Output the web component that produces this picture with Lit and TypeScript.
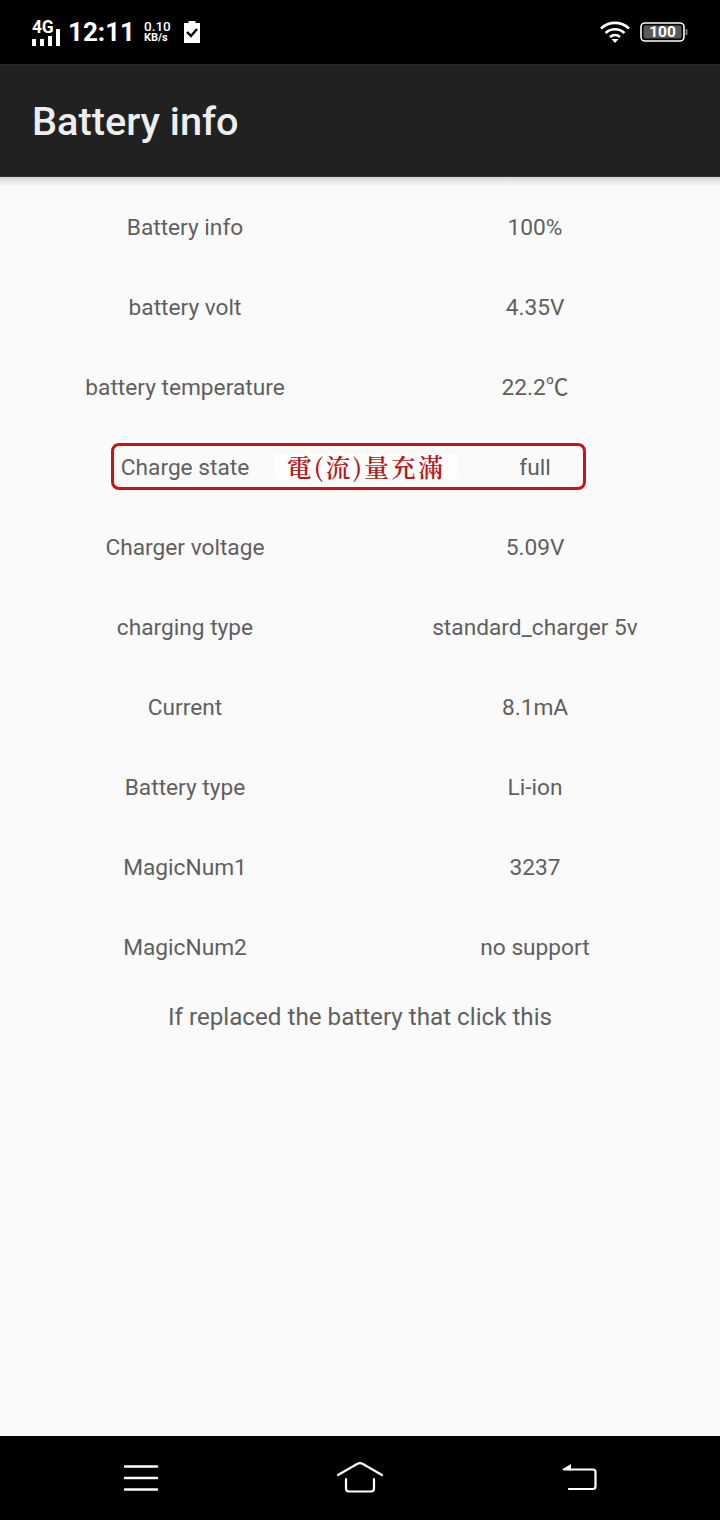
import { LitElement, html, css } from "lit";
import { customElement } from "lit/decorators.js";

const rows: [string, string][] = [
  ["Battery info", "100%"],
  ["battery volt", "4.35V"],
  ["battery temperature", "22.2℃"],
  ["Charge state", "full"],
  ["Charger voltage", "5.09V"],
  ["charging type", "standard_charger 5v"],
  ["Current", "8.1mA"],
  ["Battery type", "Li-ion"],
  ["MagicNum1", "3237"],
  ["MagicNum2", "no support"],
];

@customElement("app-root")
export class AppRoot extends LitElement {
  static styles = css`
    :host {
      display: flex;
      flex-direction: column;
      width: 720px;
      height: 1520px;
      background: #fafafa;
      font-family: Roboto, "Noto Sans CJK TC", sans-serif;
      color: #5f5f5f;
      overflow: hidden;
    }
    .status {
      height: 64px;
      flex: none;
      background: #000;
      color: #fff;
      display: flex;
      align-items: center;
      padding: 0 32px;
      box-sizing: border-box;
    }
    .net-wrap { position: relative; width: 30px; height: 30px; margin-right: 6px; }
    .net-wrap svg { display: block; }
    .net-label {
      position: absolute;
      left: 0;
      top: 2px;
      font-size: 17.500px;
      line-height: 17px;
      font-weight: 700;
      letter-spacing: -0.3px;
    }
    .time { font-size: 26px; font-weight: 700; line-height: 30px; }
    .speed {
      display: flex;
      flex-direction: column;
      align-items: flex-start;
      margin-left: 9px;
      font-size: 13.500px;
      line-height: 12px;
      font-weight: 500;
    }
    .speed .u { font-size: 11px; font-weight: 700; line-height: 12px; }
    .check { display: block; margin-left: 13px; }
    .grow { flex: 1; }
    .wifi { display: block; margin-right: 10px; }
    .batt { display: block; }
    .bar {
      height: 112px;
      flex: none;
      background: #212121;
      color: #eeeeee;
      display: flex;
      align-items: center;
      padding: 2px 0 0 32px;
      font-size: 39.700px;
      font-weight: 500;
      box-sizing: border-box;
      border-top: 1px solid #2a2a2a;
    }
    .shade {
      height: 10px;
      flex: none;
      background: linear-gradient(#d4d4d4, #fafafa);
      border-top: 1px solid #333;
      box-sizing: border-box;
    }
    .list { display: flex; flex-direction: column; padding: 0 10px; flex: 1; font-size: 22.700px; }
    .row {
      display: grid;
      grid-template-columns: 1fr 1fr;
      height: 80px;
      align-items: center;
      text-align: center;
      position: relative;
    }
    .row span { line-height: 28px; padding-top: 3px; }
    .mark {
      position: absolute;
      left: 101px;
      top: 17px;
      width: 475px;
      height: 47px;
      box-sizing: border-box;
      border: 3px solid #cc1119;
      border-radius: 8px;
    }
    .note {
      position: absolute;
      left: 265px;
      top: 28px;
      width: 182px;
      height: 25px;
      background: #fff;
      color: #b51a1c;
      font-family: "Noto Serif CJK TC", "Noto Sans CJK TC", serif;
      font-size: 25px;
      font-weight: 600;
      line-height: 25px;
      letter-spacing: 2px;
      text-align: center;
      white-space: nowrap;
    }
    .action {
      height: 60px;
      display: flex;
      align-items: center;
      justify-content: center;
      font-size: 24.200px;
      padding-top: 2px;
      box-sizing: border-box;
    }
    .nav {
      height: 84px;
      flex: none;
      background: #000;
      display: flex;
      align-items: center;
      justify-content: space-between;
      padding: 0 123px;
      box-sizing: border-box;
    }
    .nav svg { display: block; }
  `;

  render() {
    return html`
      <div class="status">
        <div class="net-wrap">
          <span class="net-label">4G</span>
          <svg width="30" height="30" viewBox="0 0 30 30" fill="#fff">
            <rect x="0" y="22" width="4" height="7"></rect>
            <rect x="8" y="22" width="4" height="7"></rect>
            <rect x="16" y="19" width="4" height="10"></rect>
            <rect x="24" y="12" width="4" height="17"></rect>
          </svg>
        </div>
        <span class="time">12:11</span>
        <div class="speed"><span>0.10</span><span class="u">KB/s</span></div>
        <svg class="check" width="16" height="22" viewBox="0 0 16 22">
          <path fill="#fff" d="M0 2h4.500V0h7v2H16v20H0z"></path>
          <path fill="none" stroke="#000" stroke-width="2.400" d="M3 11l4 4 6-7"></path>
        </svg>
        <div class="grow"></div>
        <svg class="wifi" width="30" height="22" viewBox="0 0 30 22" fill="none" stroke="#fff" stroke-width="2.600">
          <path d="M1 7.500c8-7.500 20-7.500 28 0"></path>
          <path d="M5.500 12c5.500-5 13.500-5 19 0"></path>
          <path d="M10 16c3-2.500 7-2.500 10 0"></path>
          <path fill="#fff" stroke="none" d="M11.500 18h7L15 22z"></path>
        </svg>
        <svg class="batt" width="48" height="20" viewBox="0 0 48 20">
          <rect x="1" y="1" width="43" height="18" rx="4" fill="#000" stroke="#fff" stroke-width="1.600"></rect>
          <rect x="3.500" y="3.500" width="38" height="13" rx="2" fill="#5a5a5a"></rect>
          <rect x="45.500" y="7" width="2" height="6" fill="#777"></rect>
          <text x="22.500" y="15.200" text-anchor="middle" fill="#fff" font-family="Roboto" font-size="15.500" font-weight="700">100</text>
        </svg>
      </div>
      <div class="bar">Battery info</div>
      <div class="shade"></div>
      <div class="list">
        ${rows.map(
          ([k, v], i) => html`
            <div class="row">
              <span>${k}</span><span>${v}</span>
              ${i === 3
                ? html`<div class="mark"></div>
                    <div class="note">電(流)量充滿</div>`
                : null}
            </div>
          `
        )}
        <div class="action">If replaced the battery that click this</div>
      </div>
      <div class="nav">
        <svg width="36" height="28" viewBox="0 0 36 28" stroke="#fff" stroke-width="2.400" stroke-linecap="round">
          <path d="M2 2.500h32M2 14h32M2 25.500h32"></path>
        </svg>
        <svg width="50" height="32" viewBox="0 0 50 32" fill="none" stroke="#fff" stroke-width="2.200" stroke-linecap="round" stroke-linejoin="round">
          <path d="M3 13L22.500 1.800q2.500-1.200 5 0L47 13"></path>
          <path d="M11 17v9.500q0 3 3 3h22q3 0 3-3V17"></path>
        </svg>
        <svg width="36" height="30" viewBox="0 0 36 30" fill="none" stroke="#fff" stroke-width="2.200" stroke-linecap="round" stroke-linejoin="round">
          <path d="M3 6.500h29q2.500 0 2.500 2.500v14.500q0 2.500-2.500 2.500H8"></path>
          <path fill="#fff" stroke="none" d="M1 6.500L10 1v6.500z"></path>
        </svg>
      </div>
    `;
  }
}
